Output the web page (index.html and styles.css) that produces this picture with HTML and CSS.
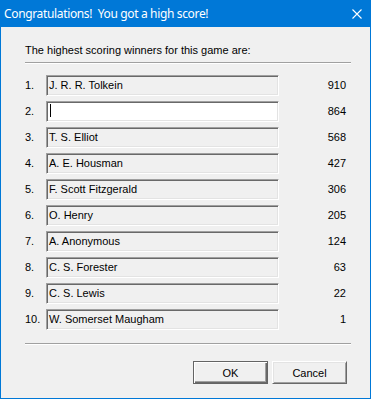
FILE: index.html
```html
<!DOCTYPE html>
<html lang="en">
<head>
    <meta charset="UTF-8">
    <title>High Score</title>
    <link rel="stylesheet" href="styles.css">
</head>
<body>
    <div class="window">
        <div class="titlebar">
            <span class="title">Congratulations!&nbsp; You got a high score!</span>
            <svg class="close" width="10" height="10" viewBox="0 0 10 10">
                <path d="M0.5 0.5 L9.5 9.5 M9.5 0.5 L0.5 9.5" stroke="#fff" stroke-width="1.1" fill="none"/>
            </svg>
        </div>
        <div class="content">
            <div class="intro">The highest scoring winners for this game are:</div>
            <div class="separator"></div>

            <div class="scores">
                <div class="row"><span class="rank">1.</span><div class="name">J. R. R. Tolkein</div><span class="score">910</span></div>
                <div class="row"><span class="rank">2.</span><div class="name edit"><span class="caret"></span></div><span class="score">864</span></div>
                <div class="row"><span class="rank">3.</span><div class="name">T. S. Elliot</div><span class="score">568</span></div>
                <div class="row"><span class="rank">4.</span><div class="name">A. E. Housman</div><span class="score">427</span></div>
                <div class="row"><span class="rank">5.</span><div class="name">F. Scott Fitzgerald</div><span class="score">306</span></div>
                <div class="row"><span class="rank">6.</span><div class="name">O. Henry</div><span class="score">205</span></div>
                <div class="row"><span class="rank">7.</span><div class="name">A. Anonymous</div><span class="score">124</span></div>
                <div class="row"><span class="rank">8.</span><div class="name">C. S. Forester</div><span class="score">63</span></div>
                <div class="row"><span class="rank">9.</span><div class="name">C. S. Lewis</div><span class="score">22</span></div>
                <div class="row"><span class="rank">10.</span><div class="name">W. Somerset Maugham</div><span class="score">1</span></div>
            </div>

            <div class="separator bottom"></div>
            <div class="buttons">
                <button class="btn default">OK</button>
                <button class="btn">Cancel</button>
            </div>
        </div>
    </div>
</body>
</html>
```

FILE: styles.css
```css
body {
    margin: 0;
    font-family: "Liberation Sans", Arial, sans-serif;
    font-size: 11px;
    color: #000;
    background: #f0f0f0;
}

.window {
    width: 371px;
    height: 399px;
    box-sizing: border-box;
    border: 1px solid #0078d7;
    border-top: none;
    background: #f0f0f0;
}

.titlebar {
    height: 27px;
    background: #0078d7;
    display: flex;
    align-items: center;
    justify-content: space-between;
    padding: 0 9px 0 4px;
    margin: 0 -1px;
}

.title {
    font-family: "Noto Sans", sans-serif;
    font-size: 12px;
    letter-spacing: -0.35px;
    color: #fff;
    line-height: 16px;
}

.close {
    display: block;
    margin-top: 1px;
}

.content {
    padding: 0 19px 0 24px;
}

.intro {
    line-height: 13px;
    margin-top: 17px;
}

.separator {
    height: 1px;
    border-top: 1px solid #a0a0a0;
    background: #fff;
    margin-top: 5px;
}

.separator.bottom {
    margin-top: 13px;
}

.scores {
    display: flex;
    flex-direction: column;
    gap: 5px;
    margin-top: 11px;
}

.row {
    display: flex;
    height: 21px;
    line-height: 21px;
}

.rank {
    width: 21px;
}

.name {
    width: 233px;
    box-sizing: border-box;
    padding-left: 2px;
    line-height: 19px;
    border-top: 1px solid #a0a0a0;
    border-left: 1px solid #a0a0a0;
    border-right: 1px solid #fff;
    border-bottom: 1px solid #fff;
    box-shadow: inset 1px 1px #696969, inset -1px -1px #e3e3e3;
    white-space: nowrap;
    position: relative;
}

.name.edit {
    background: #fff;
}

.caret {
    position: absolute;
    left: 3px;
    top: 2px;
    width: 1px;
    height: 13px;
    background: #000;
}

.score {
    flex: 1;
    text-align: right;
    padding-right: 5px;
}

.buttons {
    display: flex;
    justify-content: flex-end;
    gap: 4px;
    margin-top: 16px;
    padding-right: 4px;
}

.btn {
    width: 75px;
    height: 23px;
    padding: 0;
    font-family: "Liberation Sans", Arial, sans-serif;
    font-size: 11px;
    color: #000;
    background: #f0f0f0;
    border-top: 1px solid #fff;
    border-left: 1px solid #fff;
    border-right: 1px solid #696969;
    border-bottom: 1px solid #696969;
    box-shadow: inset 1px 1px #e3e3e3, inset -1px -1px #a0a0a0;
}

.btn.default {
    border: 1px solid #646464;
    box-shadow: inset 1px 1px #fff, inset -1px -1px #696969, inset -2px -2px #a0a0a0;
}
```
